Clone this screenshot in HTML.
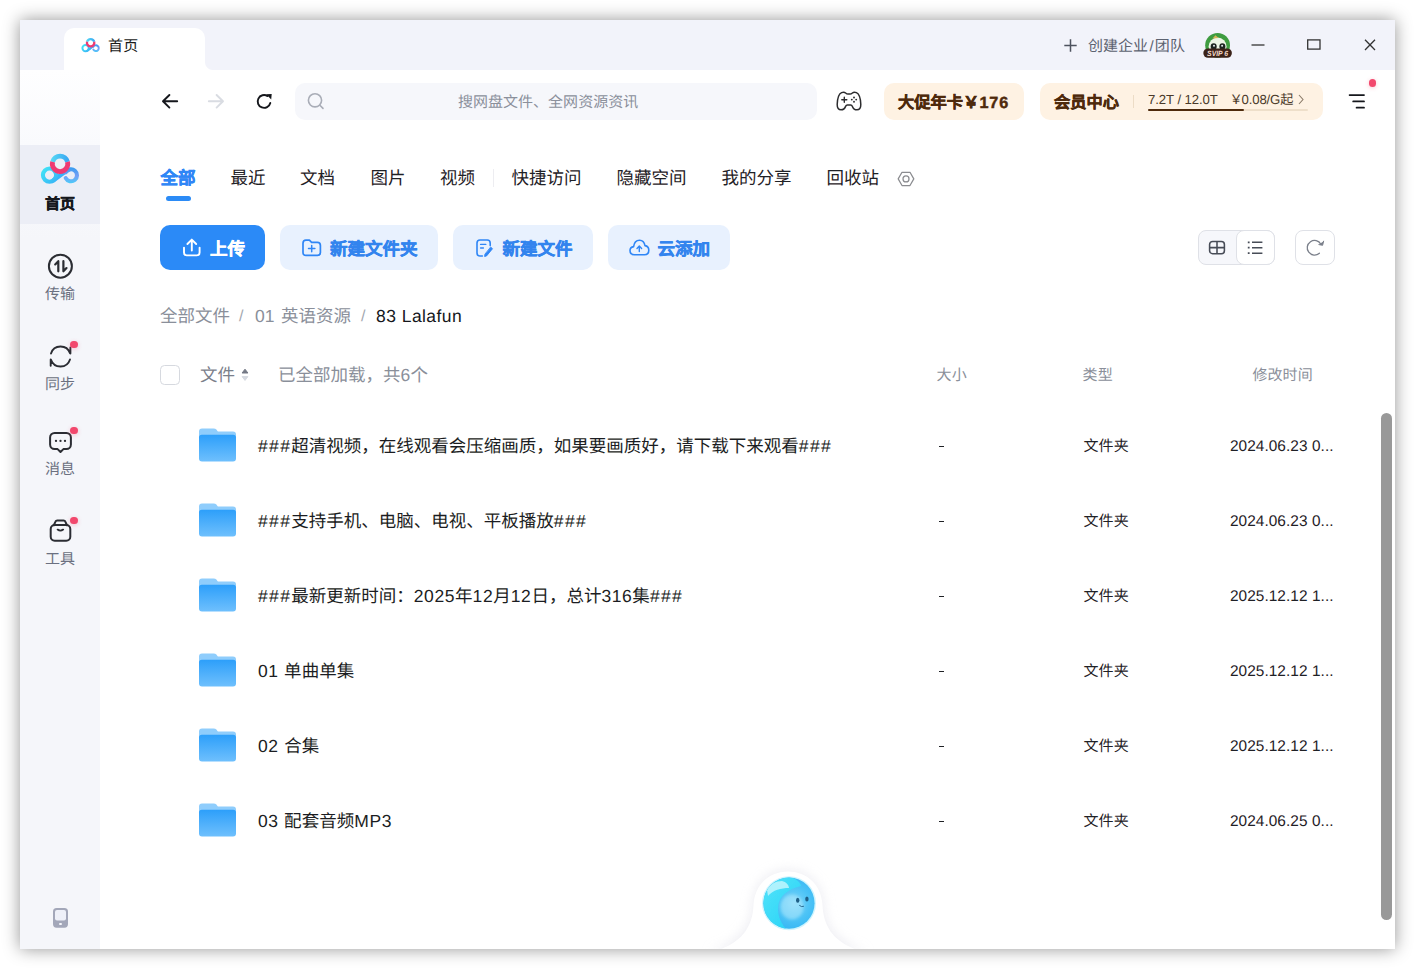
<!DOCTYPE html>
<html lang="zh-CN">
<head>
<meta charset="utf-8">
<title>首页</title>
<style>
*{box-sizing:border-box;margin:0;padding:0}
html,body{width:1415px;height:969px;overflow:hidden;background:#fff}
body{position:relative;font-family:"Liberation Sans",sans-serif;color:#1a1c20;-webkit-font-smoothing:antialiased;text-rendering:geometricPrecision}
.abs{position:absolute}
.t{position:absolute;white-space:nowrap;line-height:1;margin-top:1.3px;text-align-last:justify}
svg{position:absolute;overflow:visible}
#win{left:20px;top:20px;width:1375px;height:929px;background:#fff;box-shadow:0 0 16px rgba(0,0,0,.42)}
#titlebar{left:20px;top:20px;width:1375px;height:50px;background:#f2f3fa}
#tab{left:64px;top:28px;width:141px;height:42px;background:#fff;border-radius:10px 10px 0 0}
#tabflare{left:205px;top:62px;width:8px;height:8px;background:radial-gradient(circle at 100% 0,rgba(255,255,255,0) 7.5px,#fff 8.5px)}
#side{left:20px;top:70px;width:80px;height:879px;background:linear-gradient(#fefeff 0,#f9fafd 75px,#f5f6fa 170px)}
#sideact{left:20px;top:145px;width:80px;height:79px;background:#eceef6}
.dot{position:absolute;width:7.6px;height:7.6px;margin:.2px;border-radius:50%;background:#f2486d}
.sl{margin-top:1.1px;position:absolute;text-align-last:justify;font-size:15px;line-height:16px;color:#6b7080;white-space:nowrap}
.tb{top:169px;font-size:17.5px;color:#1f2126}
.ab{top:225px;height:45px;border-radius:10px;background:#e8f1fe}
.at{top:240px;font-size:17.5px;font-weight:bold;color:#3384ee}
.bc{top:306.5px;font-size:17.5px}
.hc{top:367px;font-size:15px;color:#8a8f9a}
.fn{left:258px;font-size:17.5px;color:#1b1d22;line-height:19px}
.ty{left:1083.5px;font-size:15px;color:#1f2126;line-height:16px}
.dt{left:1230px;font-size:15.4px;color:#1f2126;line-height:16px;letter-spacing:0.05px}
.h{letter-spacing:1.35px}
.l{letter-spacing:.58px}
[style*="font-weight:bold"],.at{-webkit-text-stroke:.45px currentColor}
</style>
</head>
<body>
<div id="win" class="abs"></div>
<div id="titlebar" class="abs"></div>
<div id="tab" class="abs"></div>
<div id="tabflare" class="abs"></div>
<div id="side" class="abs"></div>
<div id="sideact" class="abs"></div>

<!--TITLEBAR-->
<svg width="0" height="0" style="left:0;top:0">
 <defs>
  <linearGradient id="lgL" gradientUnits="userSpaceOnUse" x1="3" y1="15" x2="16" y2="28"><stop offset="0" stop-color="#42e2f6"/><stop offset="1" stop-color="#38b6f6"/></linearGradient>
  <linearGradient id="lgR" gradientUnits="userSpaceOnUse" x1="30" y1="14" x2="30" y2="28.5"><stop offset="0" stop-color="#3a9cf0"/><stop offset="0.55" stop-color="#789ff5"/><stop offset="1" stop-color="#4fc6f9"/></linearGradient>
  <linearGradient id="lgT" gradientUnits="userSpaceOnUse" x1="12" y1="5" x2="28" y2="5"><stop offset="0" stop-color="#55d6f5"/><stop offset="1" stop-color="#39a8f2"/></linearGradient>
  
 </defs>
</svg>
<svg style="left:80.5px;top:37.6px" width="19.2" height="14.4" viewBox="0 0 40 30"><path d="M13.6 26.3L24.4 18.2" fill="none" stroke="#39b2f8" stroke-width="4.3" stroke-linecap="round"/>
   <path d="M16 22.4L20.5 19L19.5 24Z" fill="#39b2f8"/>
   <circle cx="9.5" cy="21.1" r="6.6" fill="none" stroke="url(#lgL)" stroke-width="4.1"/>
   <path d="M25.8 18.3A6 6 0 1 1 25.7 24.1" fill="none" stroke="url(#lgR)" stroke-width="4.1" stroke-linecap="round"/>
   <path d="M12.6 7.9A7.7 7.7 0 0 1 27.5 7.9" fill="none" stroke="url(#lgT)" stroke-width="4.8"/>
   <path d="M12.6 7.9A7.7 7.7 0 1 0 27.5 7.9" fill="none" stroke="#ee3a73" stroke-width="4.8"/></svg>
<div class="t" style="left:108px;top:38px;font-size:15px;color:#1a1a1a;width:30.2px">首页</div>
<svg style="left:1064px;top:39px" width="13" height="13" viewBox="0 0 13 13"><path d="M6.5 0.3V12.7M0.3 6.5H12.7" stroke="#4d525e" stroke-width="1.5" fill="none"/></svg>
<div class="t" style="left:1088px;top:38px;font-size:15px;color:#5c6270;width:96.9px">创建企业<span style="padding:0 1.3px">/</span>团队</div>
<!-- avatar -->
<svg style="left:1203px;top:32px" width="30" height="27" viewBox="0 0 30 27">
 <circle cx="14.6" cy="13.3" r="12.4" fill="#3f9c40"/>
 <circle cx="14.6" cy="14.6" r="9" fill="#edf6e6"/>
 <path d="M9.5 6.5 L12.5 3.2 L15.5 6 Z" fill="#d9b45a"/>
 <ellipse cx="10.7" cy="14.5" rx="3" ry="3.2" fill="#1d2420"/>
 <ellipse cx="19.4" cy="14.5" rx="3" ry="3.2" fill="#1d2420"/>
 <circle cx="11" cy="13.8" r="1" fill="#e8eef0"/><circle cx="19.1" cy="13.8" r="1" fill="#e8eef0"/>
 <rect x="0.3" y="16.4" width="28.6" height="9.4" rx="4.7" fill="#3b2219"/>
 <text x="14.6" y="24" font-family="Liberation Sans, sans-serif" font-size="7.6" font-weight="bold" font-style="italic" fill="#f6dccb" text-anchor="middle" textLength="21" lengthAdjust="spacingAndGlyphs">SVIP 6</text>
</svg>
<svg style="left:1251px;top:44px" width="14" height="2" viewBox="0 0 14 2"><path d="M0.5 1H13.5" stroke="#333" stroke-width="1.3"/></svg>
<svg style="left:1307px;top:39px" width="14" height="11" viewBox="0 0 14 11"><rect x="0.7" y="0.9" width="12.3" height="9.2" fill="none" stroke="#333" stroke-width="1.3"/></svg>
<svg style="left:1364px;top:39px" width="12" height="12" viewBox="0 0 12 12"><path d="M1 0.8L11 11M11 0.8L1 11" stroke="#333" stroke-width="1.3" fill="none"/></svg>

<!--SIDEBAR-->
<svg style="left:40px;top:154px" width="40" height="30" viewBox="0 0 40 30"><path d="M13.6 26.3L24.4 18.2" fill="none" stroke="#39b2f8" stroke-width="4.3" stroke-linecap="round"/>
   <path d="M16 22.4L20.5 19L19.5 24Z" fill="#39b2f8"/>
   <circle cx="9.5" cy="21.1" r="6.6" fill="none" stroke="url(#lgL)" stroke-width="4.1"/>
   <path d="M25.8 18.3A6 6 0 1 1 25.7 24.1" fill="none" stroke="url(#lgR)" stroke-width="4.1" stroke-linecap="round"/>
   <path d="M12.6 7.9A7.7 7.7 0 0 1 27.5 7.9" fill="none" stroke="url(#lgT)" stroke-width="4.8"/>
   <path d="M12.6 7.9A7.7 7.7 0 1 0 27.5 7.9" fill="none" stroke="#ee3a73" stroke-width="4.8"/></svg>
<div class="sl" style="top:196px;font-weight:bold;color:#15171c;left:44.90px;width:30.2px">首页</div>
<svg style="left:40px;top:250px" width="40" height="32" viewBox="40 250 40 32" fill="none" stroke="#2b2d33" stroke-width="2" stroke-linecap="round" stroke-linejoin="round">
 <circle cx="60.4" cy="266.2" r="11.5"/>
 <path d="M58.3 271.3V261.2L55.2 264.4M63.4 261.2V271.3L66.5 268.1" stroke-width="2.2"/>
</svg>
<div class="sl" style="top:286px;left:44.90px;width:30.2px">传输</div>
<svg style="left:40px;top:340px" width="40" height="32" viewBox="40 340 40 32" fill="none" stroke="#2b2d33" stroke-width="2" stroke-linecap="round" stroke-linejoin="round">
 <path d="M51 353.5A10 10 0 0 1 70 353.3M70.4 347.4V353.6" stroke-width="1.9"/>
 <path d="M70 359.5A10 10 0 0 1 51 359.7M50.7 359.4V365.8" stroke-width="1.9"/>
</svg>
<div class="dot" style="left:70.2px;top:340.7px;box-shadow:0 1px 4px rgba(242,72,109,.3)"></div>
<div class="sl" style="top:376px;left:44.90px;width:30.2px">同步</div>
<svg style="left:40px;top:425px" width="40" height="32" viewBox="40 425 40 32" fill="none" stroke="#2b2d33" stroke-width="2" stroke-linejoin="round">
 <path d="M54.6 433H66.4A4.5 4.5 0 0 1 70.9 437.5V444.6A4.5 4.5 0 0 1 66.4 449.1H63.4L60.5 452L57.6 449.1H54.6A4.5 4.5 0 0 1 50.1 444.6V437.5A4.5 4.5 0 0 1 54.6 433Z"/>
 <g fill="#2b2d33" stroke="none"><circle cx="56" cy="440.9" r="1.15"/><circle cx="60.5" cy="440.9" r="1.15"/><circle cx="65" cy="440.9" r="1.15"/></g>
</svg>
<div class="dot" style="left:70.2px;top:426.6px;box-shadow:0 1px 4px rgba(242,72,109,.3)"></div>
<div class="sl" style="top:460.5px;left:44.90px;width:30.2px">消息</div>
<svg style="left:40px;top:512px" width="40" height="34" viewBox="40 512 40 34" fill="none" stroke="#2b2d33" stroke-width="2" stroke-linecap="round" stroke-linejoin="round">
 <rect x="50.7" y="525" width="19.6" height="15.8" rx="4"/>
 <path d="M53.8 525.2L55.6 521.4Q56 520.4 57.2 520.4H63.6Q64.8 520.4 65.2 521.4L67 525.2"/>
 <path d="M57.6 529.6Q60.4 531.6 63.2 529.6" stroke-width="1.8"/>
</svg>
<div class="dot" style="left:70px;top:516.4px;box-shadow:0 1px 4px rgba(242,72,109,.3)"></div>
<div class="sl" style="top:551px;left:44.90px;width:30.2px">工具</div>
<svg style="left:53px;top:908px" width="15" height="20" viewBox="0 0 15 20">
 <rect x="0" y="0" width="15" height="19.7" rx="3.6" fill="#a3a7b9"/>
 <rect x="2" y="2" width="11" height="10.6" rx="2" fill="#eef0f8"/>
 <rect x="6" y="15" width="3" height="2" rx="1" fill="#f5f6fb"/>
</svg>

<!--TOOLBAR-->
<svg style="left:162px;top:94px" width="16" height="15" viewBox="0 0 16 15" fill="none" stroke="#15171c" stroke-width="1.9" stroke-linecap="round" stroke-linejoin="round"><path d="M7.4 1L1 7.3L7.4 13.6M1.3 7.3H15.2"/></svg>
<svg style="left:208px;top:94px" width="16" height="15" viewBox="0 0 16 15" fill="none" stroke="#d9dce2" stroke-width="1.9" stroke-linecap="round" stroke-linejoin="round"><path d="M8.6 1L15 7.3L8.6 13.6M14.7 7.3H0.8"/></svg>
<svg style="left:256px;top:93px" width="17" height="17" viewBox="0 0 17 17" fill="none" stroke="#15171c" stroke-width="1.9" stroke-linecap="round" stroke-linejoin="round">
 <path d="M14.3 10A6.4 6.4 0 1 1 11.6 3.1"/>
 <path d="M10.2 1.3L15.7 0.9L15.2 6.4Z" fill="#15171c" stroke="none"/>
</svg>
<div class="abs" style="left:295px;top:83px;width:522px;height:37px;border-radius:10px;background:#f6f7fb"></div>
<svg style="left:307px;top:92px" width="18" height="18" viewBox="0 0 18 18" fill="none" stroke="#a9adb7" stroke-width="1.6" stroke-linecap="round"><circle cx="8" cy="8.3" r="6.6"/><path d="M12.9 13.2L16 16.4"/></svg>
<div class="t" style="left:458px;top:94px;font-size:15px;color:#8b909b;width:180.2px">搜网盘文件、全网资源资讯</div>
<svg style="left:836px;top:91px" width="26" height="20" viewBox="0 0 26 20" fill="none" stroke="#2c2c2e" stroke-width="1.5" stroke-linejoin="round" stroke-linecap="round">
 <path d="M5.6 1.6C7 1.1 8.6 1.1 9.6 2C10.4 2.7 10.9 3.1 12 3.1H14C15.1 3.1 15.6 2.7 16.4 2C17.4 1.1 19 1.1 20.4 1.6C23.4 3 24.7 9 24.8 13.6C24.9 17 23.4 18.8 21 18.8C18.6 18.8 17 17 16.4 15.4C16 14.4 15.6 14.1 14.6 14.1H11.4C10.4 14.1 10 14.4 9.6 15.4C9 17 7.4 18.8 5 18.8C2.6 18.8 1.1 17 1.2 13.6C1.3 9 2.6 3 5.6 1.6Z"/>
 <path d="M8.3 6.3V11.3M5.8 8.8H10.8" stroke-width="1.4"/>
 <g fill="#2c2c2e" stroke="none"><circle cx="18" cy="6.5" r="0.95"/><circle cx="18" cy="10.8" r="0.95"/><circle cx="15.8" cy="8.6" r="0.95"/><circle cx="20.2" cy="8.6" r="0.95"/></g>
</svg>
<div class="abs" style="left:884px;top:83px;width:140px;height:37px;border-radius:10px;background:#fef2e3"></div>
<div class="t" style="left:898px;top:93.5px;font-size:16.2px;font-weight:bold;color:#4e2a0c;width:111.0px">大促年卡<span style="display:inline-block;width:16.5px;text-align:center">￥</span><span style="letter-spacing:.85px">176</span></div>
<div class="abs" style="left:1039.5px;top:83px;width:283.5px;height:37px;border-radius:10px;background:#fef2e3"></div>
<div class="t" style="left:1054px;top:93.5px;font-size:16.2px;font-weight:bold;color:#4e2a0c;width:64.9px">会员中心</div>
<div class="abs" style="left:1133px;top:94.5px;width:1px;height:13.5px;background:#ecdcc6"></div>
<div class="t" style="left:1148px;top:92px;font-size:13.2px;color:#4a3a2a;letter-spacing:-0.1px;width:69.8px">7.2T / 12.0T</div>
<div class="t" style="left:1230.5px;top:92px;font-size:13.2px;color:#4a3a2a;letter-spacing:-0.15px;width:62.9px"><span style="display:inline-block;width:12px;text-align:center;margin-left:-1px">￥</span>0.08/G起</div>
<svg style="left:1298px;top:94px" width="6" height="11" viewBox="0 0 6 11" fill="none" stroke="#8a7a68" stroke-width="1.1"><path d="M1 1L5 5.5L1 10"/></svg>
<div class="abs" style="left:1148px;top:108.7px;width:160px;height:2px;border-radius:1px;background:#eedfca"></div>
<div class="abs" style="left:1148px;top:108.7px;width:96.3px;height:2px;border-radius:1px;background:#4e2a0c"></div>
<svg style="left:1348px;top:93px" width="18" height="17" viewBox="0 0 18 17" fill="none" stroke="#15171c" stroke-width="1.8" stroke-linecap="round"><path d="M1.6 2.1H16M5.2 8.4H16M8.6 14.7H16"/></svg>
<div class="dot" style="left:1368.5px;top:79px;box-shadow:0 1px 4px rgba(242,72,109,.3)"></div>

<!--TABS-->
<div class="t" style="left:160.5px;top:169px;font-size:17.5px;font-weight:bold;color:#2f86f6;width:35.1px">全部</div>
<div class="abs" style="left:165.5px;top:196px;width:25px;height:5px;border-radius:2.5px;background:#2b8bf6"></div>
<div class="t tb" style="left:230.5px;width:35.1px">最近</div>
<div class="t tb" style="left:300px;width:35.1px">文档</div>
<div class="t tb" style="left:370.5px;width:35.1px">图片</div>
<div class="t tb" style="left:440px;width:35.1px">视频</div>
<div class="abs" style="left:493px;top:169px;width:1px;height:18px;background:#ededf1"></div>
<div class="t tb" style="left:511.5px;width:70.1px">快捷访问</div>
<div class="t tb" style="left:616.5px;width:70.1px">隐藏空间</div>
<div class="t tb" style="left:721.5px;width:70.1px">我的分享</div>
<div class="t tb" style="left:826.5px;width:52.6px">回收站</div>
<svg style="left:897px;top:171px" width="18" height="16" viewBox="0 0 18 16" fill="none" stroke="#8b8c90" stroke-width="1.25" stroke-linejoin="round"><path d="M1.2 7.9L5 1.3H13L16.8 7.9L13 14.5H5Z"/><circle cx="9" cy="7.9" r="3"/></svg>

<!--ACTIONS-->
<div class="abs" style="left:160px;top:225px;width:105px;height:45px;border-radius:10px;background:#2b8af7"></div>
<svg style="left:182px;top:238px" width="20" height="19" viewBox="0 0 20 19" fill="none" stroke="#fff" stroke-width="1.9" stroke-linecap="round" stroke-linejoin="round"><path d="M2 9.6V14.6Q2 17.4 4.8 17.4H14.8Q17.6 17.4 17.6 14.6V9.6"/><path d="M9.8 12.6V1.8M5.4 6L9.8 1.6L14.2 6"/></svg>
<div class="t" style="left:210px;top:240px;font-size:17.5px;font-weight:bold;color:#fff;width:35.1px">上传</div>
<div class="abs ab" style="left:280px;width:158px"></div>
<svg style="left:302px;top:239px" width="20" height="18" viewBox="0 0 20 18" fill="none" stroke="#2f86f6" stroke-width="1.7" stroke-linecap="round" stroke-linejoin="round"><path d="M1 4.2Q1 1.2 4 1.2H7.4L9.6 3.4H15.4Q18.4 3.4 18.4 6.4V13.4Q18.4 16.4 15.4 16.4H4Q1 16.4 1 13.4Z"/><path d="M9.7 6.4V12.8M6.5 9.6H12.9" stroke-width="1.5"/></svg>
<div class="t at" style="left:330px;width:87.6px">新建文件夹</div>
<div class="abs ab" style="left:453px;width:140px"></div>
<svg style="left:476px;top:239px" width="18" height="19" viewBox="0 0 18 19" fill="none" stroke="#2f86f6" stroke-width="1.6" stroke-linecap="round" stroke-linejoin="round"><path d="M14.2 6.6V4Q14.2 1 11.2 1H4Q1 1 1 4V14Q1 17 4 17H6.4"/><path d="M4.6 5.4H9.8M4.6 9H7.4" stroke-width="1.4"/><path d="M14.9 8.3L16.5 9.7L10.6 16.9L8.6 17.5L8.9 15.5Z" fill="#2f86f6" stroke-width="0.9"/></svg>
<div class="t at" style="left:502.5px;width:70.1px">新建文件</div>
<div class="abs ab" style="left:608px;width:122px"></div>
<svg style="left:629px;top:239px" width="21" height="17" viewBox="0 0 21 17" fill="none" stroke="#2f86f6" stroke-width="1.6" stroke-linecap="round" stroke-linejoin="round"><path d="M5.4 15.8Q1 15.6 1 11.6Q1 8.2 4.6 7.6Q5.4 1.2 10.6 1.2Q15 1.2 16 6.6Q19.8 7.2 19.8 11.2Q19.8 15.6 15.4 15.8Z"/><path d="M10.3 12.6V7.4M8 9.4L10.3 7.1L12.6 9.4" stroke-width="1.4"/></svg>
<div class="t at" style="left:657.5px;width:52.6px">云添加</div>
<div class="abs" style="left:1198px;top:230px;width:77px;height:35px;border-radius:8px;background:#f6f7fb;border:1px solid #dfe1e7"></div>
<div class="abs" style="left:1236px;top:230px;width:39px;height:35px;border-radius:8px;background:#fff;border:1px solid #dfe1e7"></div>
<svg style="left:1208px;top:240px" width="18" height="15" viewBox="0 0 18 15" fill="none" stroke="#474c57" stroke-width="1.55"><rect x="1.6" y="1.5" width="14.8" height="12.2" rx="3"/><path d="M9 1.5V13.7M1.6 7.6H16.4"/></svg>
<svg style="left:1247px;top:240px" width="17" height="15" viewBox="0 0 17 15" fill="none" stroke="#474c57" stroke-width="1.6" stroke-linecap="butt"><path d="M5 2.3H15.4M5 7.7H15.4M5 13.2H15.4"/><path d="M0.8 2.3H2.6M0.8 7.7H2.6M0.8 13.2H2.6" stroke-width="1.8"/></svg>
<div class="abs" style="left:1295px;top:230px;width:40px;height:35px;border-radius:8px;background:#fff;border:1px solid #dfe1e7"></div>
<svg style="left:1306px;top:239px" width="19" height="17" viewBox="0 0 19 17" fill="none" stroke="#7b808b" stroke-width="1.3" stroke-linecap="round" stroke-linejoin="round"><path d="M14.9 5.2A7.3 7.3 0 1 0 13.4 14.2"/><path d="M12.9 5.6L16.6 6.3L17.6 2.2" fill="#7b808b" stroke-width="1"/></svg>
<!-- breadcrumb -->
<div class="t bc" style="left:160px;color:#8a8f9a;width:70.1px">全部文件</div>
<div class="t bc" style="left:239px;color:#a3a7b0;font-size:16px;top:307.5px;width:4.6px">/</div>
<div class="t bc" style="left:255px;color:#8a8f9a;width:96.1px"><span style="display:inline-block;width:26px">01</span>英语资源</div>
<div class="t bc" style="left:361px;color:#a3a7b0;font-size:16px;top:307.5px;width:4.6px">/</div>
<div class="t bc" style="left:376px;color:#15171c;letter-spacing:0.42px;width:86.1px">83 Lalafun</div>
<!-- table header -->
<div class="abs" style="left:160px;top:365px;width:20px;height:20px;border-radius:4.5px;border:1px solid #d6d9df;background:#fff"></div>
<div class="t" style="left:200px;top:366px;font-size:17.5px;color:#7b808b;width:35.1px">文件</div>
<svg style="left:241px;top:368px" width="8" height="14" viewBox="0 0 8 14"><path d="M4 1.2L6.9 5H1.1Z" fill="#747985" stroke="#747985" stroke-width="1" stroke-linejoin="round"/><path d="M4 12.4L6.9 8.6H1.1Z" fill="#d6d9e0" stroke="#d6d9e0" stroke-width="1" stroke-linejoin="round"/></svg>
<div class="t" style="left:278px;top:366px;font-size:17.5px;color:#8a8f9a;width:150.1px">已全部加载，共<span style="display:inline-block;width:10px;text-align:center">6</span>个</div>
<div class="t hc" style="left:936.5px;width:30.2px">大小</div>
<div class="t hc" style="left:1082.5px;width:30.2px">类型</div>
<div class="t hc" style="left:1252.5px;width:60.2px">修改时间</div>

<!--LIST-->
<svg width="0" height="0" style="left:0;top:0"><defs>
 <linearGradient id="fg" x1="0" y1="0" x2="0" y2="1"><stop offset="0" stop-color="#2d9ffa"/><stop offset="1" stop-color="#6fc0fd"/></linearGradient>
 </defs></svg>
<svg style="left:199px;top:428.3px" width="37" height="34" viewBox="0 0 37 34"><path d="M0 3.4Q0 0.4 3 0.4H14.6Q16.4 0.4 17.4 1.6L18.6 3.2Q19 3.5 19.8 3.5H34Q37 3.5 37 6.5V20H0Z" fill="#8fcdfc"/>
  <path d="M0 9.6Q0 6.8 2.8 6.8H34.2Q37 6.8 37 9.6V30.6Q37 33.6 34 33.6H3Q0 33.6 0 30.6Z" fill="url(#fg)"/></svg>
<div class="t fn" style="top:436.0px;width:574.1px"><span class="h">###</span>超清视频，在线观看会压缩画质，如果要画质好，请下载下来观看<span class="h">###</span></div>
<div class="abs" style="left:938.5px;top:445.7px;width:5px;height:1.5px;background:#1f2126"></div>
<div class="t ty" style="top:437.5px;width:45.2px">文件夹</div>
<div class="t dt" style="top:437.5px;width:103.6px">2024.06.23 0...</div>
<svg style="left:199px;top:503.3px" width="37" height="34" viewBox="0 0 37 34"><path d="M0 3.4Q0 0.4 3 0.4H14.6Q16.4 0.4 17.4 1.6L18.6 3.2Q19 3.5 19.8 3.5H34Q37 3.5 37 6.5V20H0Z" fill="#8fcdfc"/>
  <path d="M0 9.6Q0 6.8 2.8 6.8H34.2Q37 6.8 37 9.6V30.6Q37 33.6 34 33.6H3Q0 33.6 0 30.6Z" fill="url(#fg)"/></svg>
<div class="t fn" style="top:511.0px;width:329.1px"><span class="h">###</span>支持手机、电脑、电视、平板播放<span class="h">###</span></div>
<div class="abs" style="left:938.5px;top:520.7px;width:5px;height:1.5px;background:#1f2126"></div>
<div class="t ty" style="top:512.5px;width:45.2px">文件夹</div>
<div class="t dt" style="top:512.5px;width:103.6px">2024.06.23 0...</div>
<svg style="left:199px;top:578.3px" width="37" height="34" viewBox="0 0 37 34"><path d="M0 3.4Q0 0.4 3 0.4H14.6Q16.4 0.4 17.4 1.6L18.6 3.2Q19 3.5 19.8 3.5H34Q37 3.5 37 6.5V20H0Z" fill="#8fcdfc"/>
  <path d="M0 9.6Q0 6.8 2.8 6.8H34.2Q37 6.8 37 9.6V30.6Q37 33.6 34 33.6H3Q0 33.6 0 30.6Z" fill="url(#fg)"/></svg>
<div class="t fn" style="top:586.0px;width:425.1px"><span class="h">###</span>最新更新时间：<span class="l">2025</span>年<span class="l">12</span>月<span class="l">12</span>日，总计<span class="l">316</span>集<span class="h">###</span></div>
<div class="abs" style="left:938.5px;top:595.7px;width:5px;height:1.5px;background:#1f2126"></div>
<div class="t ty" style="top:587.5px;width:45.2px">文件夹</div>
<div class="t dt" style="top:587.5px;width:103.6px">2025.12.12 1...</div>
<svg style="left:199px;top:653.3px" width="37" height="34" viewBox="0 0 37 34"><path d="M0 3.4Q0 0.4 3 0.4H14.6Q16.4 0.4 17.4 1.6L18.6 3.2Q19 3.5 19.8 3.5H34Q37 3.5 37 6.5V20H0Z" fill="#8fcdfc"/>
  <path d="M0 9.6Q0 6.8 2.8 6.8H34.2Q37 6.8 37 9.6V30.6Q37 33.6 34 33.6H3Q0 33.6 0 30.6Z" fill="url(#fg)"/></svg>
<div class="t fn" style="top:661.0px;width:96.2px"><span class="l">01 </span>单曲单集</div>
<div class="abs" style="left:938.5px;top:670.7px;width:5px;height:1.5px;background:#1f2126"></div>
<div class="t ty" style="top:662.5px;width:45.2px">文件夹</div>
<div class="t dt" style="top:662.5px;width:103.6px">2025.12.12 1...</div>
<svg style="left:199px;top:728.3px" width="37" height="34" viewBox="0 0 37 34"><path d="M0 3.4Q0 0.4 3 0.4H14.6Q16.4 0.4 17.4 1.6L18.6 3.2Q19 3.5 19.8 3.5H34Q37 3.5 37 6.5V20H0Z" fill="#8fcdfc"/>
  <path d="M0 9.6Q0 6.8 2.8 6.8H34.2Q37 6.8 37 9.6V30.6Q37 33.6 34 33.6H3Q0 33.6 0 30.6Z" fill="url(#fg)"/></svg>
<div class="t fn" style="top:736.0px;width:61.2px"><span class="l">02 </span>合集</div>
<div class="abs" style="left:938.5px;top:745.7px;width:5px;height:1.5px;background:#1f2126"></div>
<div class="t ty" style="top:737.5px;width:45.2px">文件夹</div>
<div class="t dt" style="top:737.5px;width:103.6px">2025.12.12 1...</div>
<svg style="left:199px;top:803.3px" width="37" height="34" viewBox="0 0 37 34"><path d="M0 3.4Q0 0.4 3 0.4H14.6Q16.4 0.4 17.4 1.6L18.6 3.2Q19 3.5 19.8 3.5H34Q37 3.5 37 6.5V20H0Z" fill="#8fcdfc"/>
  <path d="M0 9.6Q0 6.8 2.8 6.8H34.2Q37 6.8 37 9.6V30.6Q37 33.6 34 33.6H3Q0 33.6 0 30.6Z" fill="url(#fg)"/></svg>
<div class="t fn" style="top:811.0px;width:134.0px"><span class="l">03 </span>配套音频<span class="l">MP3</span></div>
<div class="abs" style="left:938.5px;top:820.7px;width:5px;height:1.5px;background:#1f2126"></div>
<div class="t ty" style="top:812.5px;width:45.2px">文件夹</div>
<div class="t dt" style="top:812.5px;width:103.6px">2024.06.25 0...</div>
<div class="abs" style="left:1380.5px;top:412.5px;width:11.5px;height:507.5px;border-radius:6px;background:#999"></div>

<!--MASCOT-->
<svg style="left:690px;top:850px" width="200" height="99" viewBox="690 850 200 99">
 <defs>
  <filter id="ms" x="-20%" y="-30%" width="140%" height="160%"><feGaussianBlur stdDeviation="6"/></filter>
  <filter id="b1" x="-30%" y="-30%" width="160%" height="160%"><feGaussianBlur stdDeviation="1.6"/></filter>
  <filter id="b2" x="-30%" y="-30%" width="160%" height="160%"><feGaussianBlur stdDeviation="0.7"/></filter>
  <radialGradient id="sp" cx="0.6" cy="0.5" r="0.62"><stop offset="0" stop-color="#7fd6fa"/><stop offset="0.5" stop-color="#4cc3f6"/><stop offset="1" stop-color="#2fb2f3"/></radialGradient>
  <linearGradient id="sl" x1="0" y1="0" x2="1" y2="1"><stop offset="0" stop-color="#55e4fa"/><stop offset="1" stop-color="#24d2f6"/></linearGradient>
  <clipPath id="sc"><circle cx="789" cy="903.2" r="25.6"/></clipPath>
  <clipPath id="wc"><rect x="690" y="850" width="200" height="99"/></clipPath>
 </defs>
 <g clip-path="url(#wc)">
 <path d="M708 952C738 944 751 928 752.5 905C753.5 884 768 870 788 870C808 870 822.5 884 823.5 905C825 928 838 944 868 952Z" fill="#dcdce6" opacity="0.5" filter="url(#ms)"/>
 <path d="M712 952C741 944 752.5 928 753.5 905C754.5 885 769 871.5 788 871.5C807 871.5 821.5 885 822.5 905C823.5 928 835 944 864 952Z" fill="#fff"/>
 </g>
 <circle cx="789" cy="903.2" r="27" fill="#a9ecfc" opacity="0.55" filter="url(#b2)"/>
 <circle cx="789" cy="903.2" r="25.6" fill="url(#sp)"/>
 <g clip-path="url(#sc)">
  <path d="M760 903C760 886 774 876 789 877C796 878 800 882 801 886C792 888 782 893 779 902C776 912 780 922 786 929C772 930 760 918 760 903Z" fill="url(#sl)" filter="url(#b2)"/>
  <path d="M767 890C770 884 776 881 782 881C786 882 789 885 789 888C781 888 773 890 768 896Z" fill="#d2f8fe" opacity="0.75" filter="url(#b2)"/>
  <ellipse cx="792" cy="907" rx="11.5" ry="12.5" fill="#c4f0fd" opacity="0.45" filter="url(#b1)"/>
 </g>
 <ellipse cx="797.7" cy="900.3" rx="1.7" ry="2.5" fill="#1f5f86"/>
 <ellipse cx="806.9" cy="899" rx="1.7" ry="2.5" fill="#1f5f86"/>
 <path d="M799.6 905.6Q801.6 907.4 803.6 906.4" stroke="#1f5f86" stroke-width="0.9" fill="none" stroke-linecap="round"/>
</svg>
</body>
</html>
